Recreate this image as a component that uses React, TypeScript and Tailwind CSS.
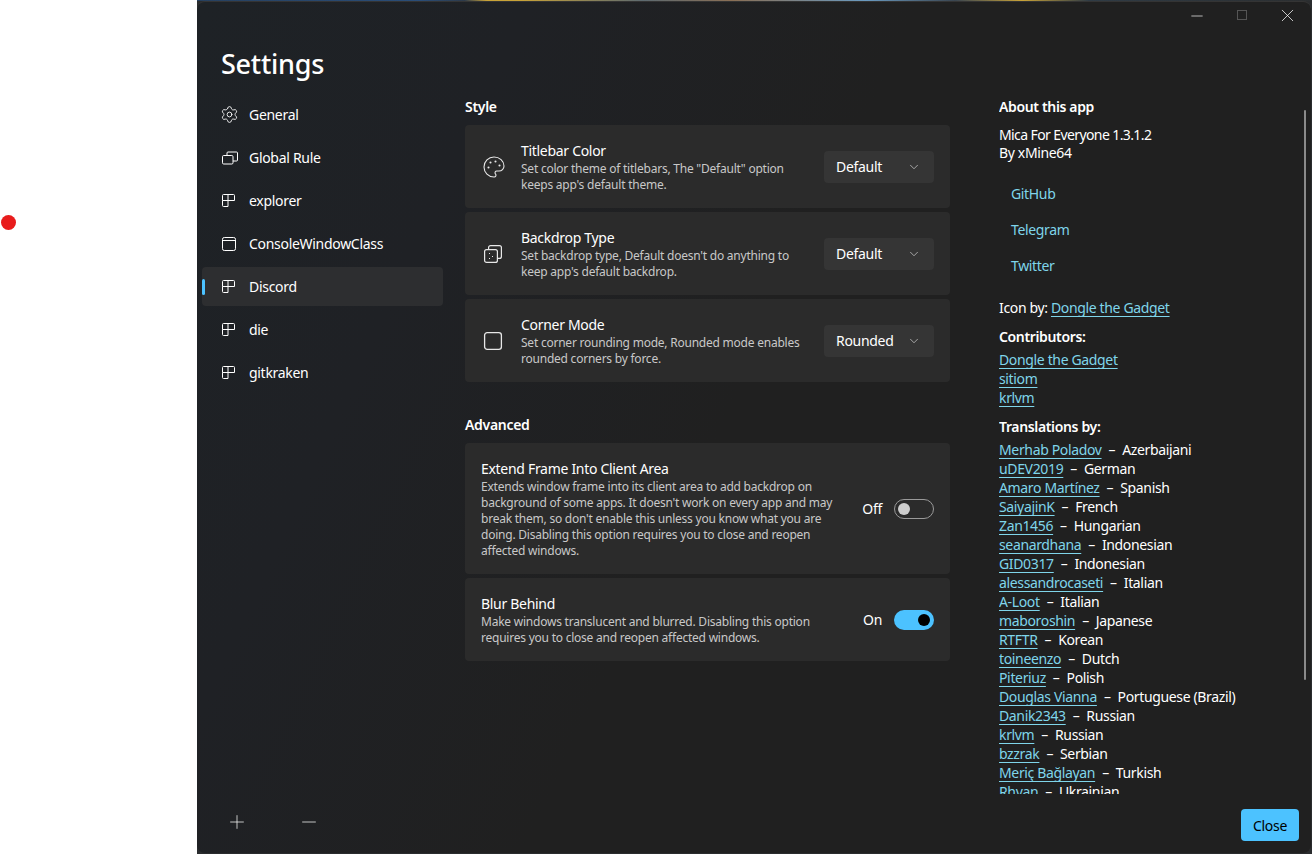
import { Palette, Settings as Gear, ChevronDown, Plus, Minus, X } from "lucide-react";
import { ReactNode } from "react";

const font = { fontFamily: '"Noto Sans", "Liberation Sans", sans-serif' };

const AppIcon = () => (
  <svg width="14" height="14" viewBox="0 0 14 14" fill="none" stroke="#fff" strokeWidth="1">
    <path d="M0.5 6.5V1.5a1 1 0 0 1 1-1h4.5v6M0.5 6.5h12V1.5a1 1 0 0 0-1-1H6M0.5 6.5V11.5a1 1 0 0 0 1 1h4.5V6.5" />
  </svg>
);

const GlobalIcon = () => (
  <svg width="16" height="14" viewBox="0 0 16 14" fill="none" stroke="#fff" strokeWidth="1">
    <rect x="0.5" y="4.5" width="10.5" height="8.5" rx="1.2" />
    <path d="M5 4.5V2a1 1 0 0 1 1-1h8.5a1 1 0 0 1 1 1v7a1 1 0 0 1-1 1H11" />
  </svg>
);

const ConsoleIcon = () => (
  <svg width="14" height="14" viewBox="0 0 14 14" fill="none" stroke="#fff" strokeWidth="1">
    <rect x="0.5" y="0.5" width="13" height="13" rx="1.8" />
    <path d="M0.5 3.5h13" />
  </svg>
);

const BackdropIcon = () => (
  <svg width="20" height="20" viewBox="0 0 20 20" fill="none" stroke="#e8e8e8" strokeWidth="1.2">
    <rect x="1.6" y="5.6" width="12.8" height="12.8" rx="2" />
    <path d="M5.6 5.5V3.6a2 2 0 0 1 2-2h8.8a2 2 0 0 1 2 2v8.8a2 2 0 0 1-2 2h-2" />
    <path d="M6 9.5h1M9 12.5h1M6 14.5h1" strokeWidth="1" />
  </svg>
);

const CornerIcon = () => (
  <svg width="20" height="20" viewBox="0 0 20 20" fill="none" stroke="#e8e8e8" strokeWidth="1.3">
    <rect x="1.6" y="1.6" width="16.8" height="16.8" rx="2.6" />
  </svg>
);

const navItems = [
  { name: "General", icon: <Gear size={19} strokeWidth={1.1} color="#fff" className="-ml-[2px]" /> },
  { name: "Global Rule", icon: <GlobalIcon /> },
  { name: "explorer", icon: <AppIcon /> },
  { name: "ConsoleWindowClass", icon: <ConsoleIcon /> },
  { name: "Discord", icon: <AppIcon />, active: true },
  { name: "die", icon: <AppIcon /> },
  { name: "gitkraken", icon: <AppIcon /> },
];

const contributors = ["Dongle the Gadget", "sitiom", "krlvm"];

const translators = [
  ["Merhab Poladov", "Azerbaijani"],
  ["uDEV2019", "German"],
  ["Amaro Martínez", "Spanish"],
  ["SaiyajinK", "French"],
  ["Zan1456", "Hungarian"],
  ["seanardhana", "Indonesian"],
  ["GID0317", "Indonesian"],
  ["alessandrocaseti", "Italian"],
  ["A-Loot", "Italian"],
  ["maboroshin", "Japanese"],
  ["RTFTR", "Korean"],
  ["toineenzo", "Dutch"],
  ["Piteriuz", "Polish"],
  ["Douglas Vianna", "Portuguese (Brazil)"],
  ["Danik2343", "Russian"],
  ["krlvm", "Russian"],
  ["bzzrak", "Serbian"],
  ["Meriç Bağlayan", "Turkish"],
  ["Rhyan", "Ukrainian"],
];

const Select = ({ value }: { value: string }) => (
  <div className="flex h-8 w-[110px] shrink-0 items-center justify-between rounded bg-[#353535] pl-3 pr-[13px] text-[14px] tracking-[-0.3px] text-white">
    {value}
    <ChevronDown size={14} strokeWidth={1.2} color="#d6d6d6" />
  </div>
);

const IconCard = ({ icon, title, desc, value }: { icon: ReactNode; title: string; desc: ReactNode; value: string }) => (
  <div className="flex h-[83px] items-center rounded bg-[#2b2b2b] pl-[18px] pr-4">
    <div className="flex w-[38px] shrink-0">{icon}</div>
    <div className="flex-1">
      <div className="text-[14px] leading-[19px] tracking-[-0.3px] text-white">{title}</div>
      <div className="mt-px text-[12px] leading-4 tracking-[-0.23px] text-[#c8c8c8]">{desc}</div>
    </div>
    <Select value={value} />
  </div>
);

const ToggleCard = ({ title, desc, on, height }: { title: string; desc: ReactNode; on: boolean; height: string }) => (
  <div className={`flex items-center rounded bg-[#2b2b2b] pl-4 pr-4 ${height}`}>
    <div className="flex-1">
      <div className="text-[14px] leading-[19px] tracking-[-0.3px] text-white">{title}</div>
      <div className="mt-px text-[12px] leading-4 tracking-[-0.23px] text-[#c8c8c8]">{desc}</div>
    </div>
    <span className="mr-[12px] text-[14px] tracking-[-0.3px] text-white">{on ? "On" : "Off"}</span>
    {on ? (
      <div className="flex h-5 w-10 items-center justify-end rounded-full bg-[#4cc2ff] pr-1">
        <div className="h-3 w-3 rounded-full bg-black" />
      </div>
    ) : (
      <div className="flex h-5 w-10 items-center rounded-full border border-[#9a9a9a] pl-[3px]">
        <div className="h-3 w-3 rounded-full bg-[#cecece]" />
      </div>
    )}
  </div>
);

const Link = ({ children }: { children: ReactNode }) => (
  <a className="text-[#7fd5ea] underline decoration-1 underline-offset-[3px]">{children}</a>
);

export default function App() {
  return (
    <div className="flex h-[854px] w-[1312px] overflow-hidden bg-white" style={font}>
      {/* blank desktop strip with the stray dot */}
      <div className="relative w-[197px] shrink-0">
        <div className="absolute left-[1px] top-[215px] h-[15px] w-[15px] rounded-full bg-[#e81c1c]" />
      </div>

      {/* wallpaper peeking round the window */}
      <div className="flex flex-1 bg-[#2a2c2e] bg-[linear-gradient(90deg,#26405f_0%,#2a4d78_20%,#2d3a4a_24%,#c9a338_26%,#c9a338_29%,#5d6a70_40%,#8a6f55_48%,#6a9ac0_60%,#3a4550_68%,#c9a338_74%,#2f3b45_80%,#2b2e30_100%)] bg-[length:100%_1px] bg-no-repeat pb-[1px] pr-[1px] pt-px">
        <div className="flex flex-1 flex-col overflow-hidden rounded-lg border-t border-[#343434] bg-[linear-gradient(115deg,#1e2226_0%,#1f2125_22%,#202020_48%)]">
          {/* caption buttons */}
          <div className="flex h-[29px] items-start justify-end pr-[13px] pt-[3px]">
            <Minus size={18} strokeWidth={0.9} color="#fff" className="mr-[31px] mt-[2px]" />
            <div className="mr-[30px] mt-[5px] h-[10px] w-[10px] border border-[#555]" />
            <X size={21} strokeWidth={0.85} color="#fff" />
          </div>

          <div className="flex min-h-0 flex-1">
            {/* nav */}
            <div className="flex w-[268px] shrink-0 flex-col">
              <div className="ml-6 mt-[13px] text-[27px] font-medium leading-[40px] tracking-[-0.25px] text-white">
                Settings
              </div>
              <div className="ml-[5px] mt-[11px] flex w-[241px] flex-col gap-1">
                {navItems.map((item) => (
                  <div
                    key={item.name}
                    className={`relative flex h-[39px] items-center rounded pl-[20px] text-[14px] tracking-[-0.3px] text-white ${
                      item.active ? "bg-[#2d2e30]" : ""
                    }`}
                  >
                    {item.active && (
                      <div className="absolute left-0 top-3 h-4 w-[3px] rounded-full bg-[#4cc2ff]" />
                    )}
                    <span className="flex w-[27px] shrink-0">{item.icon}</span>
                    {item.name}
                  </div>
                ))}
              </div>
              <div className="ml-[29px] mt-auto flex h-[53px] items-start gap-[50px] pt-[11px]">
                <Plus size={22} strokeWidth={0.8} color="#fff" />
                <Minus size={22} strokeWidth={0.8} color="#fff" />
              </div>
            </div>

            {/* settings */}
            <div className="w-[485px] shrink-0 pt-[66px]">
              <div className="text-[14px] font-semibold leading-[20px] tracking-[-0.3px] text-white">Style</div>
              <div className="mt-2 flex flex-col gap-1">
                <IconCard
                  icon={<Palette size={24} strokeWidth={1.1} color="#e8e8e8" className="-ml-[1px]" />}
                  title="Titlebar Color"
                  desc={<>Set color theme of titlebars, The "Default" option<br />keeps app's default theme.</>}
                  value="Default"
                />
                <IconCard
                  icon={<BackdropIcon />}
                  title="Backdrop Type"
                  desc={<>Set backdrop type, Default doesn't do anything to<br />keep app's default backdrop.</>}
                  value="Default"
                />
                <IconCard
                  icon={<CornerIcon />}
                  title="Corner Mode"
                  desc={<>Set corner rounding mode, Rounded mode enables<br />rounded corners by force.</>}
                  value="Rounded"
                />
              </div>
              <div className="mt-[33px] text-[14px] font-semibold leading-[20px] tracking-[-0.3px] text-white">Advanced</div>
              <div className="mt-2 flex flex-col gap-1">
                <ToggleCard
                  title="Extend Frame Into Client Area"
                  height="h-[131px]"
                  on={false}
                  desc={
                    <>
                      Extends window frame into its client area to add backdrop on<br />
                      background of some apps. It doesn't work on every app and may<br />
                      break them, so don't enable this unless you know what you are<br />
                      doing. Disabling this option requires you to close and reopen<br />
                      affected windows.
                    </>
                  }
                />
                <ToggleCard
                  title="Blur Behind"
                  height="h-[83px]"
                  on
                  desc={<>Make windows translucent and blurred. Disabling this option<br />requires you to close and reopen affected windows.</>}
                />
              </div>
            </div>

            {/* about */}
            <div className="relative ml-[49px] flex min-w-0 flex-1 flex-col">
              <div className="absolute right-[5px] top-[79px] h-[570px] w-[2px] rounded-full bg-[#8a8a8a]" />
              <div className="h-[763px] overflow-hidden pt-[66px] text-[14px] tracking-[-0.35px] text-white">
                <div className="font-semibold leading-[20px]">About this app</div>
                <div className="mt-[9px] leading-[18px] tracking-[-0.6px]">Mica For Everyone 1.3.1.2</div>
                <div className="leading-[18px]">By xMine64</div>
                <div className="ml-3 mt-[22px] flex flex-col gap-[17px] leading-[19px] text-[#7fd5ea]">
                  <span>GitHub</span>
                  <span>Telegram</span>
                  <span>Twitter</span>
                </div>
                <div className="mt-[23px] leading-[19px]">
                  Icon by: <Link>Dongle the Gadget</Link>
                </div>
                <div className="mt-[10px] font-semibold leading-[19px]">Contributors:</div>
                <div className="mt-[4px] flex flex-col leading-[19px]">
                  {contributors.map((c) => (
                    <span key={c}>
                      <Link>{c}</Link>
                    </span>
                  ))}
                </div>
                <div className="mt-[10px] font-semibold leading-[19px]">Translations by:</div>
                <div className="mt-[4px] flex flex-col leading-[19px]">
                  {translators.map(([who, lang]) => (
                    <span key={who + lang} className="whitespace-nowrap">
                      <Link>{who}</Link>
                      <span className="mx-[7px]">–</span>
                      {lang}
                    </span>
                  ))}
                </div>
              </div>
              <div className="mt-[15px] flex justify-end pr-[12px]">
                <button className="h-8 w-[58px] rounded bg-[#4cc2ff] text-[14px] tracking-[-0.3px] text-black">Close</button>
              </div>
            </div>
          </div>
        </div>
      </div>
    </div>
  );
}
